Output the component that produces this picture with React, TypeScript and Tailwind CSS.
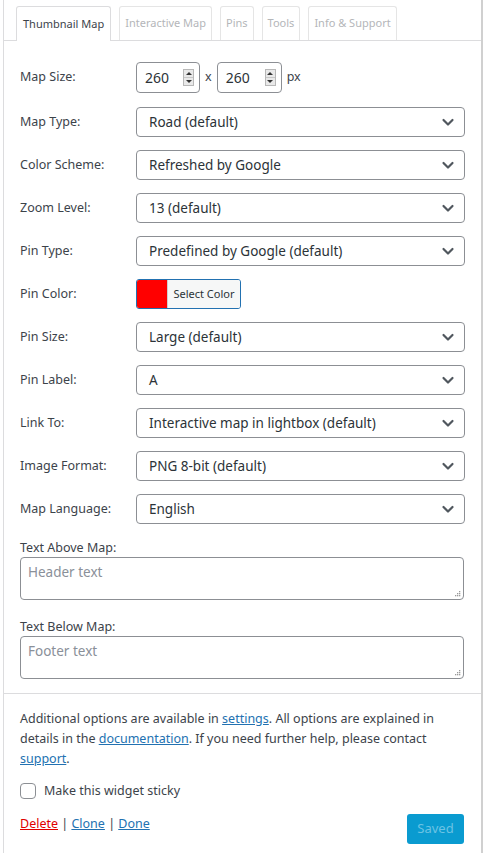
// App.tsx — thumbnail map widget settings panel
const font = { fontFamily: '"Noto Sans", "Open Sans", sans-serif' };

const tabs = ['Thumbnail Map', 'Interactive Map', 'Pins', 'Tools', 'Info & Support'];

const selects: { label: string; value: string }[] = [
  { label: 'Map Type:', value: 'Road (default)' },
  { label: 'Color Scheme:', value: 'Refreshed by Google' },
  { label: 'Zoom Level:', value: '13 (default)' },
  { label: 'Pin Type:', value: 'Predefined by Google (default)' },
];

const selects2: { label: string; value: string }[] = [
  { label: 'Pin Size:', value: 'Large (default)' },
  { label: 'Pin Label:', value: 'A' },
  { label: 'Link To:', value: 'Interactive map in lightbox (default)' },
  { label: 'Image Format:', value: 'PNG 8-bit (default)' },
  { label: 'Map Language:', value: 'English' },
];

function Chevron() {
  return (
    <svg aria-hidden="true" className="w-4 h-4 text-[#50575e]" fill="none" stroke="currentColor" strokeWidth={2.2} viewBox="0 0 16 16">
      <path strokeLinecap="round" strokeLinejoin="round" d="M3.5 6l4.5 4.5L12.5 6" />
    </svg>
  );
}

function Spinner() {
  return (
    <div className="flex flex-col w-[11px] h-[17px] border border-[#b8b8b8] bg-[#e9e9e9]">
      <div className="flex-1 flex items-center justify-center border-b border-[#c8c8c8]">
        <div className="w-0 h-0 border-l-[3px] border-r-[3px] border-b-[3px] border-l-transparent border-r-transparent border-b-[#333]" />
      </div>
      <div className="flex-1 flex items-center justify-center">
        <div className="w-0 h-0 border-l-[3px] border-r-[3px] border-t-[3px] border-l-transparent border-r-transparent border-t-[#333]" />
      </div>
    </div>
  );
}

function NumberBox({ w }: { w: string }) {
  return (
    <div className={`${w} h-[31px] border border-[#8c8f94] rounded-[4px] flex items-center justify-between pl-[8px] pr-[5px] text-[14px] text-[#2c3338]`}>
      <span>260</span>
      <Spinner />
    </div>
  );
}

function Row({ label, children }: { label: string; children: React.ReactNode }) {
  return (
    <div className="flex items-center">
      <div className="w-[116px] shrink-0 text-[12.5px] text-[#3c434a]">{label}</div>
      {children}
    </div>
  );
}

function Select({ value }: { value: string }) {
  return (
    <div className="w-[329px] h-[30px] border border-[#8c8f94] rounded-[4px] flex items-center justify-between pl-[12px] pr-[8px] text-[13.5px] text-[#2c3338]">
      <span>{value}</span>
      <Chevron />
    </div>
  );
}

function TextArea({ placeholder }: { placeholder: string }) {
  return (
    <div className="relative w-[444px] h-[43px] border border-[#8c8f94] rounded-[4px] px-[7px] pt-[4px] text-[13.5px] text-[#8a9099]">
      {placeholder}
      <svg aria-hidden="true" className="absolute right-[2px] bottom-[2px] w-[7px] h-[7px]" viewBox="0 0 7 7" fill="#9a9a9a">
        <rect x="5" y="1" width="1.3" height="1.3" />
        <rect x="3" y="3" width="1.3" height="1.3" />
        <rect x="5" y="3" width="1.3" height="1.3" />
        <rect x="1" y="5" width="1.3" height="1.3" />
        <rect x="3" y="5" width="1.3" height="1.3" />
        <rect x="5" y="5" width="1.3" height="1.3" />
      </svg>
    </div>
  );
}

export default function App() {
  return (
    <div className="w-[492px] h-[853px] bg-white" style={font}>
      <div className="ml-[3px] w-[480px] h-[853px] border-l border-[#dcdcde] border-r-2 border-r-[#d0d0d0] flex flex-col">
        {/* Pestañas */}
        <div className="flex items-end gap-[8px] pl-[12px] pt-[6px] border-b border-[#dcdcde]">
          {tabs.map((t, i) => (
            <div
              key={t}
              className={
                i === 0
                  ? 'h-[35px] -mb-px px-[6px] flex items-center border border-b-0 border-[#dcdcde] rounded-t-[3px] bg-white text-[11px] text-[#3c434a]'
                  : 'h-[34px] px-[5px] flex items-center border border-b-0 border-[#e5e5e5] rounded-t-[3px] text-[11px] text-[#b4b6b9]'
              }
            >
              {t}
            </div>
          ))}
        </div>

        {/* Formulario */}
        <div className="pl-[16px] pt-[21px] flex flex-col">
          <Row label="Map Size:">
            <div className="flex items-center gap-[5px] text-[12.5px] text-[#3c434a]">
              <NumberBox w="w-[64px]" />
              <span>x</span>
              <NumberBox w="w-[65px]" />
              <span>px</span>
            </div>
          </Row>
          <div className="flex flex-col gap-[13px] mt-[14px]">
            {selects.map((s) => (
              <Row key={s.label} label={s.label}>
                <Select value={s.value} />
              </Row>
            ))}
            <Row label="Pin Color:">
              <div className="w-[105px] h-[30px] border border-[#2271b1] rounded-[3px] flex overflow-hidden">
                <div className="w-[30px] bg-[#ff0000]" />
                <div className="flex-1 bg-[#f6f7f7] flex items-center justify-center text-[11px] text-[#2c3338] border-l border-[#cfcfcf]">Select Color</div>
              </div>
            </Row>
            {selects2.map((s) => (
              <Row key={s.label} label={s.label}>
                <Select value={s.value} />
              </Row>
            ))}
          </div>

          <div className="mt-[15px] text-[12.5px] text-[#3c434a] leading-[17px]">Text Above Map:</div>
          <div className="mt-[1px]">
            <TextArea placeholder="Header text" />
          </div>
          <div className="mt-[18px] text-[12.5px] text-[#3c434a] leading-[17px]">Text Below Map:</div>
          <div className="mt-[1px]">
            <TextArea placeholder="Footer text" />
          </div>
        </div>

        {/* Pie */}
        <div className="mt-[14px] border-t border-[#dcdcde] pl-[16px] pr-[16px] pt-[15px] flex flex-col">
          <p className="text-[12.5px] leading-[20px] text-[#3c434a]">
            Additional options are available in <a className="text-[#2271b1] underline">settings</a>. All options are explained in details in the <a className="text-[#2271b1] underline">documentation</a>. If you need further help, please contact <a className="text-[#2271b1] underline">support</a>.
          </p>
          <label className="mt-[13px] flex items-center gap-[8px] text-[12.5px] text-[#3c434a]">
            <span className="w-[16px] h-[16px] border border-[#8c8f94] rounded-[4px] bg-white" />
            Make this widget sticky
          </label>
          <div className="mt-[10px] flex items-start justify-between pr-[1px]">
            <div className="mt-[4px] text-[12.5px] text-[#3c434a]">
              <a className="text-[#e00000] underline">Delete</a> | <a className="text-[#2271b1] underline">Clone</a> | <a className="text-[#2271b1] underline">Done</a>
            </div>
            <div className="mt-[3px] w-[57px] h-[30px] rounded-[3px] bg-[#0a9bd0] flex items-center justify-center text-[13px] text-[#6cc3e4]">Saved</div>
          </div>
        </div>
      </div>
    </div>
  );
}
